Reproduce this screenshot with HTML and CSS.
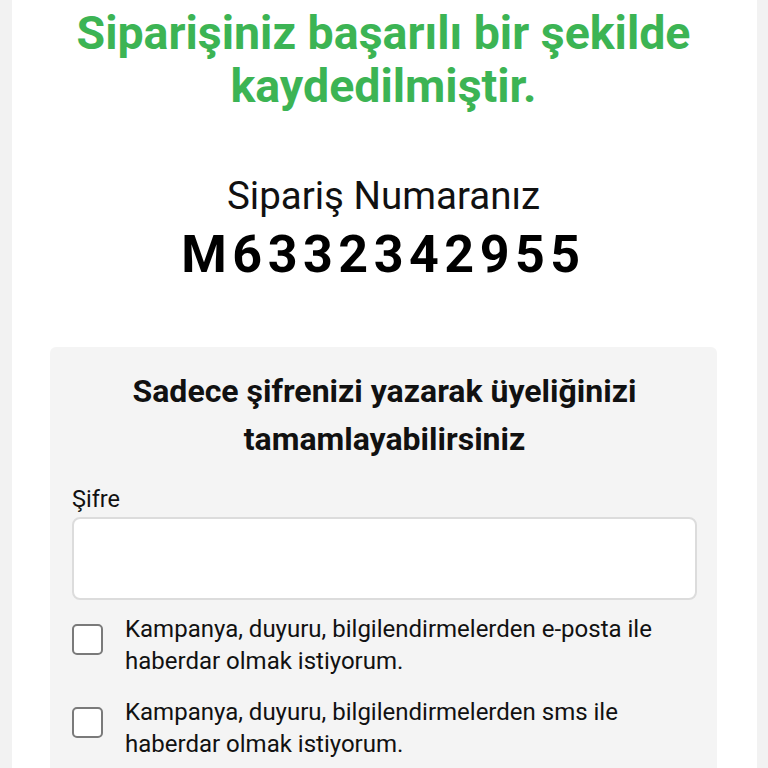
FILE: index.html
```html
<!DOCTYPE html>
<html lang="tr">
<head>
    <meta charset="UTF-8">
    <meta name="viewport" content="width=device-width, initial-scale=1.0">
    <title>Sipariş Onayı</title>
    <link rel="stylesheet" href="styles.css">
</head>
<body>
    <div class="page">
        <h1 class="success-title">Siparişiniz başarılı bir şekilde kaydedilmiştir.</h1>
        <p class="order-label">Sipariş Numaranız</p>
        <p class="order-number">M6332342955</p>

        <div class="signup-card">
            <h2 class="signup-title">Sadece şifrenizi yazarak üyeliğinizi tamamlayabilirsiniz</h2>
            <label class="field-label" for="password">Şifre</label>
            <input class="field-input" type="password" id="password" name="password">

            <label class="check-row">
                <input class="check-box" type="checkbox" name="email_optin">
                <span class="check-text">Kampanya, duyuru, bilgilendirmelerden e-posta ile haberdar olmak istiyorum.</span>
            </label>
            <label class="check-row">
                <input class="check-box" type="checkbox" name="sms_optin">
                <span class="check-text">Kampanya, duyuru, bilgilendirmelerden sms ile haberdar olmak istiyorum.</span>
            </label>
        </div>
    </div>
</body>
</html>
```

FILE: styles.css
```css
body {
    margin: 0;
    background-color: #f2f2f2;
    font-family: Roboto, "Noto Sans", sans-serif;
}
.page {
    margin: 0 11px 0 12px;
    padding: 7px 40px 40px 38px;
    background-color: #fff;
    text-align: center;
}
.success-title {
    margin: 0;
    font-size: 46.5px;
    line-height: 53px;
    font-weight: 700;
    color: #3cb454;
}
.order-label {
    margin: 61px 0 0;
    font-size: 38.5px;
    line-height: 44px;
    color: #111;
}
.order-number {
    margin: 9px 0 0;
    font-size: 52px;
    line-height: 56px;
    font-weight: 700;
    letter-spacing: 5.5px;
    color: #000;
}
.signup-card {
    margin-top: 64px;
    padding: 20px 20px 30px 22px;
    background-color: #f4f4f4;
    border-radius: 6px;
    text-align: left;
}
.signup-title {
    margin: 0 0 23px;
    font-size: 32px;
    line-height: 48px;
    font-weight: 700;
    color: #111;
    text-align: center;
}
.field-label {
    display: block;
    font-size: 23.5px;
    line-height: 26px;
    color: #111;
}
.field-input {
    display: block;
    box-sizing: border-box;
    width: 100%;
    height: 83px;
    margin-top: 5px;
    border: 2px solid #dcdcdc;
    border-radius: 8px;
    background-color: #fff;
    outline: none;
}
.check-row {
    display: flex;
    align-items: flex-start;
    gap: 22px;
    margin-top: 13px;
}
.check-row + .check-row {
    margin-top: 19px;
}
.check-box {
    appearance: none;
    flex: none;
    box-sizing: border-box;
    width: 31px;
    height: 31px;
    margin: 11px 0 0;
    border: 2px solid #7a7a7a;
    border-radius: 5px;
    background-color: #fff;
}
.check-text {
    font-size: 24px;
    line-height: 32px;
    color: #111;
}
```
